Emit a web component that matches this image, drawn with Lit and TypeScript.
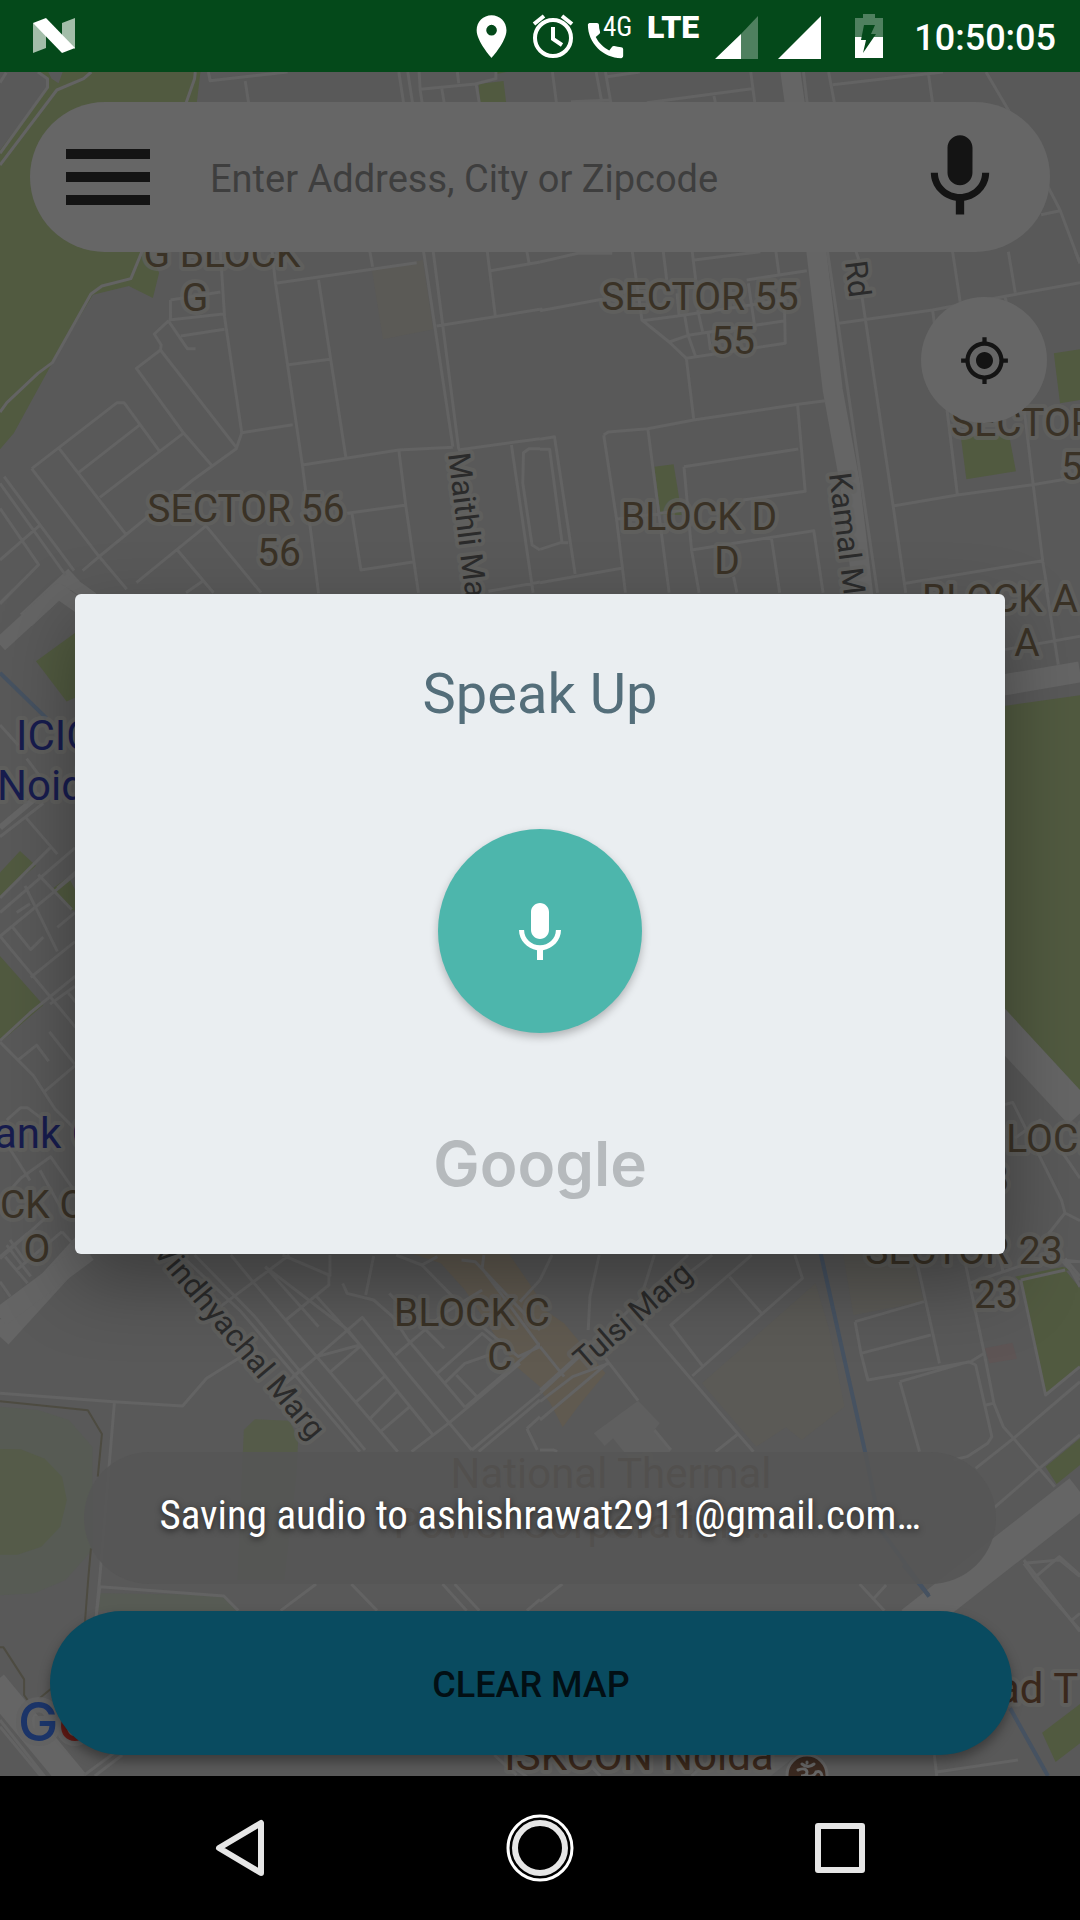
import { LitElement, html, svg, css } from "lit";
import { customElement } from "lit/decorators.js";

type Sheet = {
  at: [number, number];
  scale: [number, number];
  areas: [string, string][];
  thin: string;
  wide?: [string, number][];
  water?: string;
  fence?: string;
};

type Label = {
  text: string;
  x: number;
  y: number;
  kind: "area" | "road" | "bank" | "place";
  anchor?: "start" | "middle";
  turn?: number;
};

const NORMAL: [number, number] = [540 / 1568, 1 / 3];
const SIDE: [number, number] = [1 / 3, 700 / 1568];

/* The city map is kept as survey sheets, each with its own grid. */
const SHEETS: Sheet[] = [
  {
    at: [0, 0],
    scale: NORMAL,
    areas: [
      ["park", "M0 216H582L570 320H500L420 755H0Z"],
      ["land", "M0 216H110L140 236L140 262L0 450ZM140 216H182L170 250L150 236Z"],
      ["park", "M1390 252L1462 243L1470 310H1394Z"],
      ["park", "M1440 216H1470L1442 222Z"],
    ],
    thin:
      "M110 216L138 236V262L0 460M265 216L243 236L165 270L0 495M567 216L565 236L540 310M605 216L610 242L835 216M712 243L722 310" +
      "M1158 216L1172 310M1184 216L1198 310M1217 216L1220 270L1226 310M1220 268L1380 252L1440 236V216M1328 216L1332 250M1283 266L1290 310M1382 250L1392 310M0 248L18 218",
  },
  {
    at: [540, 0],
    scale: NORMAL,
    areas: [],
    thin:
      "M36 216L48 310M163 216L180 310M190 216L206 310M195 230L290 216M90 305L205 300M310 308L615 266M612 216L624 310M505 288L510 310M765 216L776 310M838 216L855 310M850 254L1170 216M1128 222L1140 310M1295 216L1360 330L1510 630L1568 790M1455 644L1510 632",
    wide: [["M725 200L752 400", 20]],
  },
  {
    at: [0, 250],
    scale: NORMAL,
    areas: [
      ["park", "M0 0H430L462 68L444 144L374 108L270 134L150 342L40 550L0 598Z"],
      ["sand", "M1080 60L1228 30L1258 238L1112 268Z"],
    ],
    thin:
      "M412 5L380 86L296 108L264 132L152 338L110 370L20 458L0 486" +
      "M640 5L652 200L702 548L686 596L560 690L290 918L240 962M790 5L800 100L878 645L925 1030M1074 5L1082 50M800 100L1210 38M925 90L960 326L1004 620M832 345L958 328M702 548L850 524M495 150L640 126M495 150V210M490 210L648 192M490 212L448 252L468 285L466 300L396 355L530 545L618 650M525 258L652 238M490 214L544 296H568M466 300L686 592" +
      "M92 656L340 458H360L462 602M92 656L285 916L368 1018M172 596L368 856M404 526L228 668M532 550L290 742M12 680L215 962M0 700L190 975M0 930L115 826M0 775L112 944L0 1062M878 645L1158 600L1315 592M1330 600L1568 566M1158 600L1178 765L1215 1028M1008 790L1175 766M1022 790L1048 960L1198 936M600 826L396 998M600 830L758 1028M515 900L620 1028M588 994L540 1028" +
      "M1230 5L1315 590M1258 5L1332 598M1268 228L1568 178M1415 5L1438 196M1425 62L1568 36M1530 5L1536 38M1485 585L1548 1028M1418 1024L1568 996M1568 596H1536L1520 608L1518 700L1545 885L1568 900",
    wide: [["M75 1110L215 975", 17], ["M195 990L270 1045", 12]],
  },
  {
    at: [540, 250],
    scale: NORMAL,
    areas: [
      ["park", "M332 650L388 643L412 795L350 795Z"],
      ["park", "M1222 560L1362 555L1382 664L1238 688Z"],
      ["park", "M1492 310L1568 298V450L1510 460Z"],
    ],
    thin:
      "M0 36L110 10H210M0 182L180 148M268 5L296 210L375 276L425 325L446 505M358 5L368 90M442 5L452 90M448 30L640 5M685 5L694 72M600 90L775 62M296 212L400 198L710 150M375 276L430 256L712 212M425 325L712 280L710 170M420 196L430 256L452 320M458 180L472 244M398 130L404 198M605 100L625 240M488 245L495 300M0 175L8 182" +
      "M185 555L198 546L313 536L446 510L750 463L828 452M185 555L222 805L248 1028M313 536L352 845L375 1028M418 650L440 900L462 1028M418 650L750 597M748 465L770 724L590 750M222 808L350 790L420 780M440 900L795 842L822 1028M672 865L696 1028M562 980L572 1028M0 998L236 955" +
      "M0 568L42 560L102 972M0 598H28L64 878M0 898L60 878H82M918 5L926 30M835 5L980 1028M935 140L1025 765L1062 1028M868 220L1140 180L1355 138L1568 98M1140 180L1150 260M1198 5L1220 155M1350 140L1355 160M1360 5L1380 128M1555 5L1568 40M1182 480L1212 735M1025 768L1212 735L1430 704L1568 680M1405 470L1432 704L1460 935L1475 1028M1062 1000L1460 932",
    wide: [["M802 0L850 420L900 700L945 1090", 20]],
  },
  {
    at: [0, 580],
    scale: SIDE,
    areas: [
      ["park", "M108 182L230 116V262L200 272Z"],
      ["park", "M0 655L60 607L108 640L0 708Z"],
      ["park", "M160 690L205 665L230 700V740H215Z"],
      ["park", "M0 842L130 952L10 1030H0Z"],
    ],
    thin:
      "M0 52L70 0M0 425L80 500M0 325L55 370M80 400L120 440M0 575L130 500M75 530L172 614M0 712L150 600M0 745L225 600M115 660L215 738M75 685L172 832M0 798L225 660M35 775L92 828L130 800M50 745L90 725M172 690L230 652M172 778L225 745M92 890L225 810M0 798L230 1005M150 950L225 910M0 1032L90 970L230 885M205 925L230 948M0 1035L100 1110L165 1185L225 1230M55 1075L110 1042L146 1078M148 1012L225 1085M135 1145L225 1088M20 1210L62 1182H82L140 1215M0 1240L90 1345M62 1340L152 1292L225 1370M0 1392L62 1340M120 1322L200 1430M0 1520L150 1420M20 1490L92 1560M30 1478L80 1530",
    wide: [["M0 145L175 25L270 75", 15], ["M0 555L120 480", 6], ["M0 1695L250 1490", 23]],
    water: "M0 208L140 310",
  },
  {
    at: [980, 580],
    scale: SIDE,
    areas: [["park", "M0 290L300 258V1170L0 930Z"]],
    thin:
      "M195 0L235 190M75 156L300 126M75 1175L98 1170L245 1390L255 1418L205 1465M255 1418L300 1435M105 1250L180 1210L300 1340M60 1478L75 1530M255 1520L300 1560",
    wide: [["M0 244L300 206", 21], ["M40 985L300 1195", 32]],
  },
  {
    at: [0, 1230],
    scale: NORMAL,
    areas: [
      ["meadow", "M0 530L110 540L200 570L268 650V960L190 1050L100 1090L0 1096Z"],
      ["park-dim", "M0 657L60 658L130 686L180 740L194 810L175 890L120 950L50 974H0Z"],
      ["park-dim", "M708 600L740 568L840 572L866 625L860 740L825 1050H690Z"],
      ["street", "M1165 60H1470L1540 165L1568 210V470L1500 410L1440 320L1350 180L1280 100Z"],
    ],
    thin:
      "M525 75L700 245L1045 665M565 75L740 260L1060 660M670 75L730 150L920 380L1155 665M770 110L1010 300L1255 612M920 200L1050 350M820 75L955 135V165L830 270M640 230L840 75M770 110L925 290M958 75V140M995 160L1008 190L1085 210L1140 260L1185 330L1350 532M1062 195L1085 78M1130 190L1290 355M1150 75L1225 105L1400 290L1505 380L1568 350M1225 105L1270 80M830 460L1052 262L1190 438L1370 660M850 440L920 380L1045 345M960 425L1045 350M1035 515L1118 438M1075 565L1152 485M1105 605L1190 530M1148 375L1290 250L1400 180M1270 430L1400 310L1440 345M1290 460L1350 400L1420 375M1325 435L1385 500M1350 532L1568 340M1195 665L1305 578L1510 400M1405 75L1400 115L1568 350M1340 90L1380 95L1568 300M1370 660L1568 490M1390 665L1568 510M1530 596L1568 560M1530 596L1560 660M1510 215L1568 150" +
      "M0 490L330 515L530 528L600 445L700 380M332 520L290 1040L280 1150M0 80L80 10M48 120L180 5M0 155L30 200M15 80L80 160M180 5L215 45",
    wide: [["M0 262L255 65", 20]],
    fence: "M0 514L255 541L296 612L284 740M264 955L256 1050L246 1185",
  },
  {
    at: [540, 1230],
    scale: NORMAL,
    areas: [
      ["sand", "M470 460L800 160L840 300L884 530L760 630L714 592L628 650Z"],
      ["sand", "M880 72H1080L1115 215L910 255Z"],
      ["street", "M0 230L70 280L190 430L150 480L110 530L66 592L30 520L0 480Z"],
      ["rose", "M1292 355L1372 338L1385 386L1305 400Z"],
      ["park", "M1396 150L1525 120L1568 175V410L1468 495Z"],
      ["park", "M1380 140L1520 110L1540 120L1390 150Z"],
      ["park", "M1468 710L1568 625V705L1500 762Z"],
      ["block", "M156 610L245 542L285 512L348 580L332 600L380 660L360 700H270L212 625L188 648Z"],
    ],
    thin:
      "M35 75L0 150M172 75L145 200L140 300M332 75L300 180L310 270M500 75L400 155M430 75L0 490M615 75L380 285L475 412M550 140L645 252L442 438M740 75L762 145L645 252M300 280L575 612L620 665M510 665L575 612M190 385L285 512M0 350L70 440M0 515L95 440L200 400M0 570L195 400M0 480L150 340M332 600L380 660M0 660H40L50 665" +
      "M915 275L1115 215M915 275L932 370L952 450L1250 395L1290 370M932 370L1135 315M1090 75L1160 400M1230 75L1290 370L1318 520L1345 590L1375 625L1495 770M1245 160L1360 120L1460 85L1568 95M1345 130L1335 75M1045 455L1245 395L1265 405L1312 620L1300 640L1240 680L1200 690M1045 455L1102 665M1295 525L1315 520M1396 150L1468 495L1568 410M1525 90L1568 170M1500 75L1568 150M1265 715L1375 625L1568 455M1320 832L1450 715L1568 615M1396 150L1525 120M1405 1000L1510 990L1568 1040M1405 1000L1440 1050L1568 1200",
    wide: [["M1080 1180L1568 785", 34]],
    water: "M815 70L945 670L990 900L1130 1100",
  },
  {
    at: [0, 1560],
    scale: NORMAL,
    areas: [["meadow", "M290 100L650 105L692 152H280Z"]],
    thin:
      "M290 80L650 108L692 152M290 80L278 180M815 152L918 72M1020 72L1095 152M1285 72L1355 152M1320 72L1392 152M1530 152L1568 118M0 480L130 650M0 500L120 650M245 645L330 580M275 648L355 585M1435 585L1500 645M1490 620L1530 650",
    wide: [["M-20 370L220 670", 28]],
    fence: "M0 262H10L70 358V405L80 420M115 415L150 385",
  },
  {
    at: [540, 1560],
    scale: NORMAL,
    areas: [
      ["park", "M1458 518L1568 432V550L1497 606Z"],
      ["block", "M440 648L500 590H740L670 648Z"],
    ],
    thin:
      "M0 125L65 72M928 72L1000 152M970 115L1005 75M1405 0L1568 215M1440 50L1508 -10L1568 45M1545 180L1568 160M1145 585L1152 648M1152 636L1388 600M150 620L175 648M440 648L470 620",
    water: "M1055 15L1128 105M1365 445L1475 648",
  },
];

const LABELS: Label[] = [
  { text: "G BLOCK", x: 222, y: 267, kind: "area" },
  { text: "G", x: 195, y: 311, kind: "area" },
  { text: "SECTOR 56", x: 246, y: 522, kind: "area" },
  { text: "56", x: 279, y: 566, kind: "area" },
  { text: "SECTOR 55", x: 700, y: 310, kind: "area" },
  { text: "55", x: 733, y: 354, kind: "area" },
  { text: "BLOCK D", x: 699, y: 530, kind: "area" },
  { text: "D", x: 727, y: 574, kind: "area" },
  { text: "SECTOR", x: 951, y: 436, kind: "area", anchor: "start" },
  { text: "5", x: 1061, y: 480, kind: "area", anchor: "start" },
  { text: "BLOCK A", x: 1000, y: 612, kind: "area" },
  { text: "A", x: 1027, y: 656, kind: "area" },
  { text: "BLOCK B", x: 982, y: 1152, kind: "area", anchor: "start" },
  { text: "B", x: 997, y: 1192, kind: "area" },
  { text: "BLOCK O", x: -71, y: 1218, kind: "area", anchor: "start" },
  { text: "O", x: 37, y: 1262, kind: "area" },
  { text: "BLOCK C", x: 472, y: 1326, kind: "area" },
  { text: "C", x: 500, y: 1370, kind: "area" },
  { text: "SECTOR 23", x: 964, y: 1264, kind: "area" },
  { text: "23", x: 996, y: 1308, kind: "area" },
  { text: "ICICI", x: 16, y: 750, kind: "bank", anchor: "start" },
  { text: "Noida", x: -3, y: 800, kind: "bank", anchor: "start" },
  { text: "ank C", x: -6, y: 1148, kind: "bank", anchor: "start" },
  { text: "National Thermal", x: 611, y: 1488, kind: "place" },
  { text: "Power Corporation…", x: 582, y: 1538, kind: "place" },
  { text: "ISKCON Noida", x: 639, y: 1770, kind: "place" },
  { text: "ad T", x: 997, y: 1703, kind: "place", anchor: "start" },
  { text: "Maithli Ma", x: 448, y: 454, kind: "road", anchor: "start", turn: 83 },
  { text: "Rd", x: 845, y: 262, kind: "road", anchor: "start", turn: 83 },
  { text: "Kamal M", x: 829, y: 474, kind: "road", anchor: "start", turn: 83 },
  { text: "Vindhyachal Marg", x: 152, y: 1252, kind: "road", anchor: "start", turn: 50 },
  { text: "Tulsi Marg", x: 585, y: 1371, kind: "road", anchor: "start", turn: -41 },
];

const MIC =
  "M12 14c1.66 0 2.99-1.34 2.99-3L15 5c0-1.66-1.34-3-3-3S9 3.34 9 5v6c0 1.66 1.34 3 3 3zm5.3-3c0 3-2.54 5.1-5.3 5.1S6.7 14 6.7 11H5c0 3.41 2.72 6.23 6 6.72V21h2v-3.28c3.28-.48 6-3.3 6-6.72h-1.7z";

@customElement("city-map")
export class CityMap extends LitElement {
  static styles = css`
    :host { display: block; }
    .map { display: block; width: 100%; height: 100%; background: #595959; }
    .land { fill: #595959; }
    .park { fill: #515a40; }
    .park-dim { fill: #555b49; }
    .meadow { fill: #575b54; }
    .sand { fill: #5b5a56; }
    .street { fill: #605a50; }
    .rose { fill: #5e5555; }
    .block { fill: #5f5f5f; }
    .thin, .wide, .water, .fence { fill: none; vector-effect: non-scaling-stroke; stroke-linejoin: round; }
    .thin { stroke: #636363; stroke-width: 3px; }
    .wide { stroke: #656565; }
    .water { stroke: #465261; stroke-width: 4px; }
    .fence { stroke: #4d4b41; stroke-width: 2px; }
    .label { font-family: Roboto, sans-serif; paint-order: stroke; stroke: rgba(98, 98, 96, 0.7); stroke-width: 8px; stroke-linejoin: round; }
    .middle { text-anchor: middle; }
    .area { font-size: 39px; fill: #3a3226; }
    .bank { font-size: 42px; fill: #171c4e; }
    .place { font-size: 42px; fill: #3a281c; }
    .road { font-size: 31px; fill: #2b2b2b; }
    .brand { font: 500 54px Inter, sans-serif; stroke: rgba(98, 98, 98, 0.8); stroke-width: 10px; paint-order: stroke; }
    .blue { fill: #1b3468; }
    .red { fill: #651b16; }
    .badge { fill: #3a2920; stroke: #636363; stroke-width: 3px; }
    .sign { fill: none; stroke: #666; stroke-width: 3px; stroke-linecap: round; }
  `;

  render() {
    return html`<svg class="map" viewBox="0 72 1080 1704" preserveAspectRatio="xMidYMid slice" aria-hidden="true">
      ${SHEETS.map(
        (s) => svg`<g transform="translate(${s.at[0]} ${s.at[1]}) scale(${s.scale[0]} ${s.scale[1]})">
          ${s.areas.map(([kind, d]) => svg`<path class=${kind} d=${d}></path>`)}
          ${(s.wide ?? []).map(([d, w]) => svg`<path class="wide" stroke-width=${w} d=${d}></path>`)}
          <path class="thin" d=${s.thin}></path>
          <path class="water" d=${s.water ?? ""}></path>
          <path class="fence" d=${s.fence ?? ""}></path>
        </g>`
      )}
      ${LABELS.map(
        (l) => svg`<text class="label ${l.kind} ${l.anchor ?? "middle"}" transform="translate(${l.x} ${l.y}) rotate(${l.turn ?? 0})">${l.text}</text>`
      )}
      <text class="brand" x="18" y="1741"><tspan class="blue">G</tspan><tspan class="red">o</tspan></text>
      <circle class="badge" cx="807" cy="1775" r="20"></circle>
      <path class="sign" d="M798 1770q8-3 9 2q0 4-6 4q7 0 7 7M808 1776q6 1 8-4q5-2 6 4v6M802 1764q6 5 12 0M807 1762v1"></path>
    </svg>`;
  }
}

@customElement("status-bar")
export class StatusBar extends LitElement {
  static styles = css`
    :host { display: flex; align-items: center; justify-content: space-between; height: 72px; padding: 0 24px 0 32px; box-sizing: border-box; background: #04491a; color: #fff; font-family: Roboto, sans-serif; }
    .logo, .icons { display: block; }
    .tray { display: flex; align-items: center; gap: 28px; }
    .net { font-family: "Roboto Condensed", Roboto, sans-serif; font-size: 27px; fill: #fff; }
    .lte { font-size: 32px; font-weight: 900; fill: #fff; }
    .fill { fill: #fff; }
    .dim { fill: #4f805f; }
    .half { fill: #a3bda9; }
    .back { fill: #04491a; }
    .hand { fill: none; stroke: #fff; stroke-width: 4px; }
    .clock { padding-top: 4px; font-size: 36px; font-weight: 500; line-height: 68px; }
  `;

  render() {
    return html`
      <svg class="logo" width="44" height="72" viewBox="32 0 44 72" aria-hidden="true">
        <path class="half" d="M33 23L46 30V48L33 53ZM62 23L75 18V49L62 38Z"></path>
        <path class="fill" d="M33 23L46 18L75 48L62 53Z"></path>
      </svg>
      <div class="tray">
        <svg class="icons" width="411" height="72" viewBox="477 0 411 72" aria-hidden="true">
          <path class="fill" transform="translate(468 11) scale(2.13)" d="M12 2C8.13 2 5 5.13 5 9c0 5.25 7 13 7 13s7-7.75 7-13c0-3.87-3.13-7-7-7zm0 9.5a2.5 2.5 0 1 1 0-5 2.5 2.5 0 0 1 0 5z"></path>
          <circle class="hand" cx="555" cy="38" r="18"></circle>
          <path class="hand" d="M555 27V39L564 45M536 24L546 16M574 24L564 16"></path>
          <path class="fill" transform="translate(584 17) scale(1.96)" d="M20.01 15.38c-1.23 0-2.42-.2-3.53-.56a.98.98 0 0 0-1.01.24l-1.57 1.97c-2.83-1.35-5.48-3.9-6.89-6.83l1.95-1.66c.27-.28.35-.67.24-1.02-.37-1.11-.56-2.3-.56-3.53 0-.54-.45-.99-.99-.99H4.19C3.65 3 3 3.24 3 3.99 3 13.28 10.73 21 20.01 21c.71 0 .99-.63.99-1.18v-3.45c0-.54-.45-.99-.99-.99z"></path>
          <text class="net" x="605" y="36">4G</text>
          <text class="lte" x="649" y="38">LTE</text>
          <path class="dim" d="M760 16V59H743V34Z"></path>
          <path class="fill" d="M743 34V59H717ZM823 16V59H780Z"></path>
          <path class="dim" d="M865 14H877V18H885V38H857V18H865Z"></path>
          <path class="fill" d="M857 37H885V58H857Z"></path>
          <path class="back" d="M866 25H877L873 34H878L865 53L868 40H863Z"></path>
        </svg>
        <time class="clock">10:50:05</time>
      </div>
    `;
  }
}

@customElement("speech-dialog")
export class SpeechDialog extends LitElement {
  static styles = css`
    :host { display: flex; flex-direction: column; align-items: center; box-sizing: border-box; padding: 64px 24px 40px; border-radius: 6px; background: #eaeef1; box-shadow: 0 28px 72px rgba(0, 0, 0, 0.34); font-family: Roboto, sans-serif; }
    .title { margin: 0; font-size: 56px; line-height: 72px; font-weight: 400; color: #546e7a; }
    .talk { display: grid; place-items: center; box-sizing: border-box; width: 204px; height: 204px; margin: 99px 0 85px; padding: 4px 0 0; border: 0; border-radius: 50%; background: #4db6ac; box-shadow: 0 4px 8px rgba(0, 0, 0, 0.25); }
    .mic { fill: #fff; }
    .brand { margin: 0; font: 600 62px/92px Inter, sans-serif; padding-bottom: 4px; color: #b6babd; }
  `;

  render() {
    return html`
      <h2 class="title">Speak Up</h2>
      <button class="talk" type="button" aria-label="Listen">
        <svg class="mic" width="72" height="72" viewBox="0 0 24 24"><path d=${MIC}></path></svg>
      </button>
      <p class="brand">Google</p>
    `;
  }
}

@customElement("app-root")
export class AppRoot extends LitElement {
  static styles = css`
    :host { display: flex; flex-direction: column; min-height: 100vh; background: #000; font-family: Roboto, sans-serif; }
    .stage { position: relative; display: flex; flex: 1; flex-direction: column; overflow: hidden; }
    .backdrop { position: absolute; inset: 0; }
    .front { position: relative; display: flex; flex: 1; flex-direction: column; padding: 30px 30px 21px; }
    .search { display: flex; align-items: center; height: 150px; padding: 0 40px 0 36px; box-sizing: border-box; border-radius: 75px; background: #666; }
    .plain { display: grid; place-items: center; padding: 0; border: 0; background: none; }
    .ink { fill: #141414; }
    .query { flex: 1; min-width: 0; margin: 0 24px 0 60px; padding: 4px 0 0; border: 0; outline: 0; background: none; color: #141414; font: 400 38px/48px Roboto, sans-serif; }
    .query::placeholder { color: #3e3e3e; opacity: 1; }
    .locate { display: grid; place-items: center; align-self: flex-end; width: 126px; height: 126px; margin: 45px 3px auto 0; padding: 0; border: 0; border-radius: 50%; background: #666; }
    .toast { margin: 0 54px 27px; padding-bottom: 6px; border-radius: 66px; background: rgba(85, 85, 85, 0.88); color: #fff; text-align: center; font-family: "Roboto Condensed", Roboto, sans-serif; font-size: 41px; line-height: 126px; white-space: nowrap; text-shadow: 0 2px 6px rgba(0, 0, 0, 0.6); }
    .clear { height: 144px; margin: 0 38px 0 20px; padding: 4px 0 0; border: 0; border-radius: 72px; background: #094b60; box-shadow: 0 6px 12px rgba(0, 0, 0, 0.35); color: #020f14; font: 500 36px/48px Roboto, sans-serif; }
    .modal { position: absolute; inset: 0; display: grid; align-items: center; padding: 0 75px; }
    .nav { display: flex; align-items: center; justify-content: center; height: 144px; gap: 200px; background: #000; }
    .line { fill: none; stroke: #e6e6e6; stroke-width: 6px; stroke-linejoin: round; }
    .ring { fill: none; stroke: #fff; stroke-width: 3px; }
  `;

  render() {
    return html`
      <status-bar></status-bar>
      <main class="stage">
        <city-map class="backdrop"></city-map>
        <div class="front">
          <form class="search" role="search">
            <button class="plain" type="button" aria-label="Menu">
              <svg class="ink" width="84" height="56" viewBox="0 0 84 56"><path d="M0 0H84V10H0ZM0 23H84V33H0ZM0 46H84V56H0Z"></path></svg>
            </button>
            <input class="query" type="text" aria-label="Address" placeholder="Enter Address, City or Zipcode" />
            <button class="plain" type="button" aria-label="Voice search">
              <svg class="ink" width="100" height="100" viewBox="0 0 24 24"><path d=${MIC}></path></svg>
            </button>
          </form>
          <button class="locate" type="button" aria-label="My location">
            <svg class="ink" width="51" height="51" viewBox="0 0 24 24"><path d="M12 8c-2.21 0-4 1.79-4 4s1.79 4 4 4 4-1.79 4-4-1.79-4-4-4zm8.94 3c-.46-4.17-3.77-7.48-7.94-7.94V1h-2v2.06C6.83 3.52 3.52 6.83 3.06 11H1v2h2.06c.46 4.17 3.77 7.48 7.94 7.94V23h2v-2.06c4.17-.46 7.48-3.77 7.94-7.94H23v-2h-2.06zM12 19c-3.87 0-7-3.13-7-7s3.13-7 7-7 7 3.13 7 7-3.13 7-7 7z"></path></svg>
          </button>
          <div class="toast" role="status">Saving audio to ashishrawat2911@gmail.com…</div>
          <button class="clear" type="button">CLEAR MAP</button>
        </div>
        <div class="modal"><speech-dialog role="dialog" aria-label="Speak Up"></speech-dialog></div>
      </main>
      <nav class="nav">
        <button class="plain" type="button" aria-label="Back">
          <svg width="100" height="72" viewBox="0 0 100 72"><path class="line" d="M29 36L71 11V61Z"></path></svg>
        </button>
        <button class="plain" type="button" aria-label="Home">
          <svg width="100" height="72" viewBox="0 0 100 72"><circle class="ring" cx="50" cy="36" r="32"></circle><circle class="line" cx="50" cy="36" r="25"></circle></svg>
        </button>
        <button class="plain" type="button" aria-label="Recent apps">
          <svg width="100" height="72" viewBox="0 0 100 72"><rect class="line" x="28" y="14" width="44" height="44"></rect></svg>
        </button>
      </nav>
    `;
  }
}
